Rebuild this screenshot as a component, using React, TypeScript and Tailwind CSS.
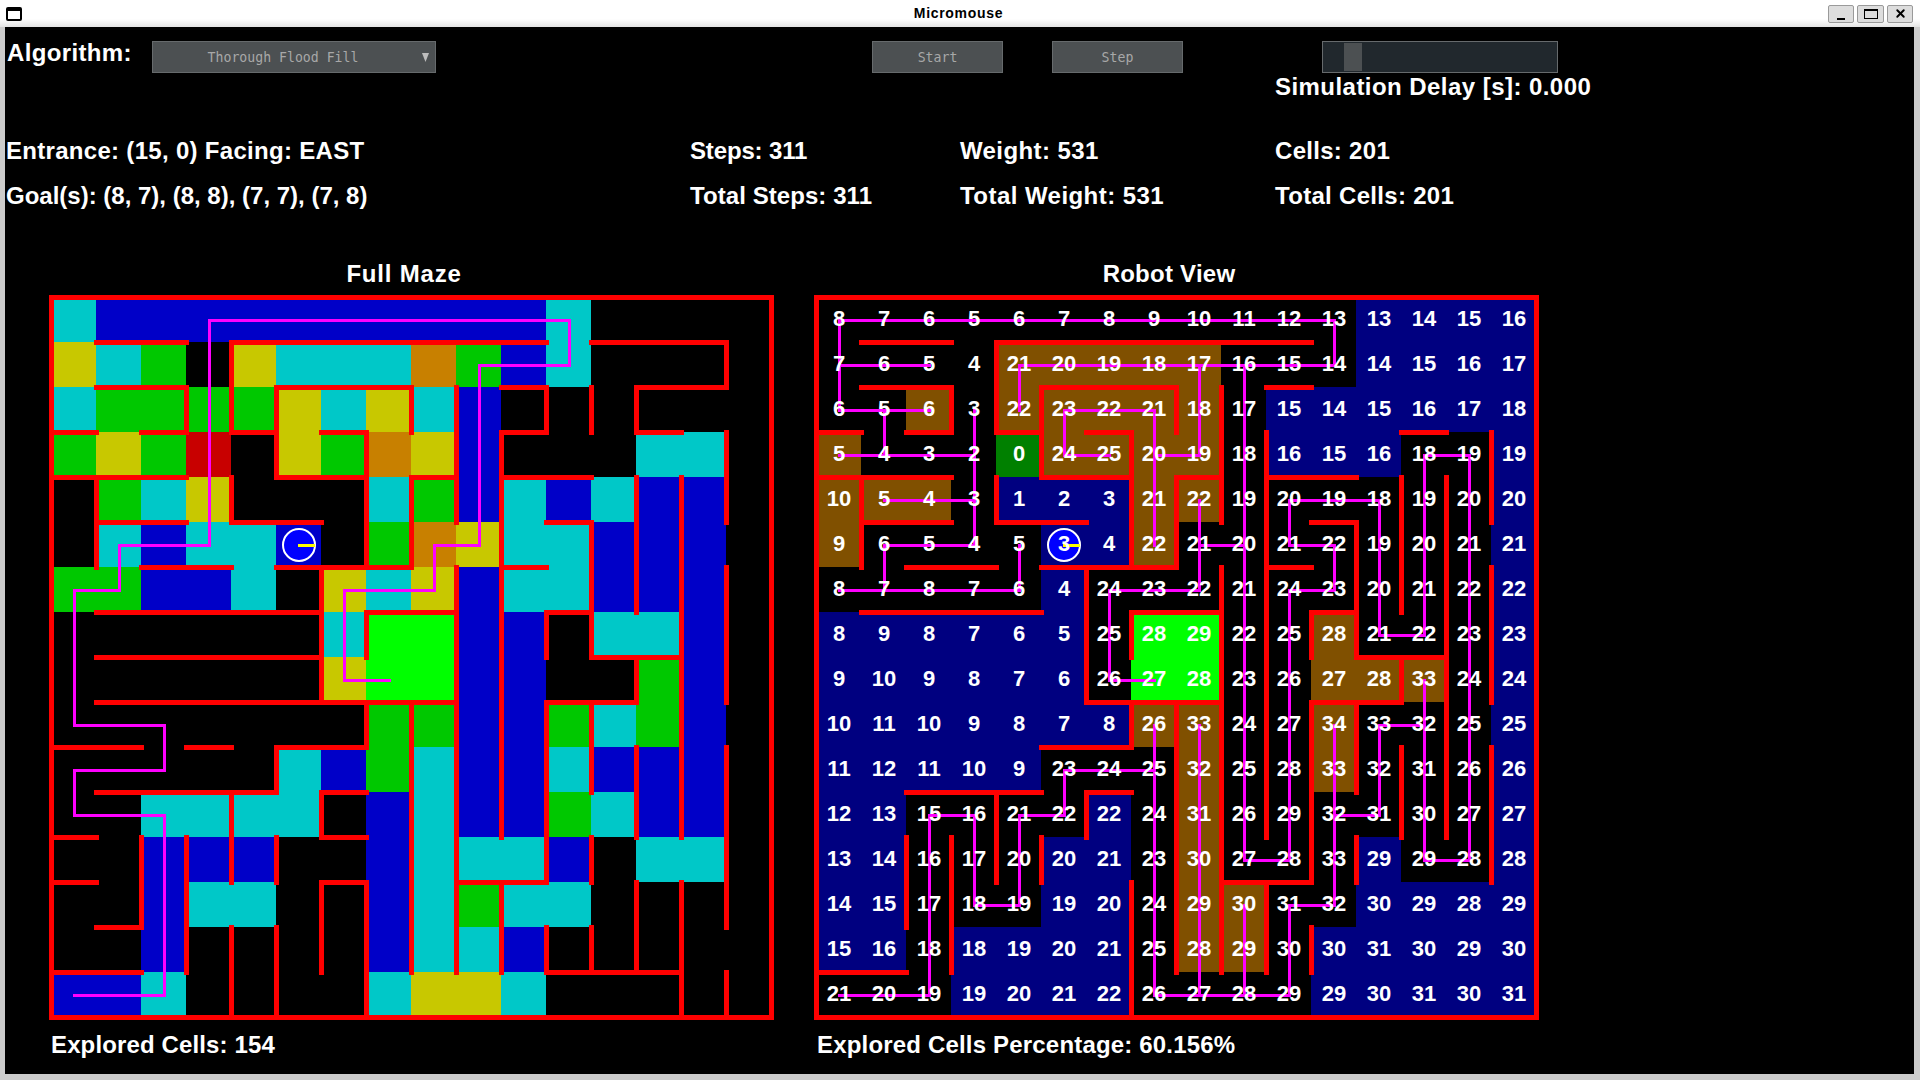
import { X } from "lucide-react"

const CELL = 45

const cellColors: Record<string, string> = {
  ".": "bg-black",
  c: "bg-[#00c8c8]",
  b: "bg-[#0000c8]",
  g: "bg-[#00c800]",
  y: "bg-[#c8c800]",
  o: "bg-[#c88000]",
  r: "bg-[#c80000]",
  l: "bg-[#00ff00]",
  n: "bg-[#000080]",
  w: "bg-[#805000]",
  d: "bg-[#008000]",
}

const fullColors = [
  "cbbbbbbbbbbc....",
  "ycg.ycccogbc....",
  "cggggycycb......",
  "gygr.ygoyb...cc.",
  ".gcy...cgbcbcbb.",
  ".cbccb.goyccbbb.",
  "ggbbc.ycybccbbb.",
  "......cllbb.ccb.",
  "......yllbb..gb.",
  ".......ggbbgcgb.",
  ".....cbgcbbcbbb.",
  "..cccc.bcbbgcbb.",
  "..bbb..bcccb.cc.",
  "..bcc..bcgcc....",
  "..b....bccb.....",
  "bbc....cyyc.....",
]

const robotColors = [
  "............nnnn",
  "....wwwww...nnnn",
  "..w.wwwww.nnnnnn",
  "w...dwwww.nnn..n",
  "www.nnnww......n",
  "w....nnw.......n",
  ".....n.........n",
  "nnnnnn.ll..w...n",
  "nnnnnn.ll..www.n",
  "nnnnnnnww..w...n",
  "nnnnn...w..w...n",
  "nn....n.w......n",
  "nn...nn.w...n..n",
  "nn...nn.ww..nnnn",
  "nn.nnnn.ww.nnnnn",
  "...nnnn....nnnnn",
]

const distances = [
  [8, 7, 6, 5, 6, 7, 8, 9, 10, 11, 12, 13, 13, 14, 15, 16],
  [7, 6, 5, 4, 21, 20, 19, 18, 17, 16, 15, 14, 14, 15, 16, 17],
  [6, 5, 6, 3, 22, 23, 22, 21, 18, 17, 15, 14, 15, 16, 17, 18],
  [5, 4, 3, 2, 0, 24, 25, 20, 19, 18, 16, 15, 16, 18, 19, 19],
  [10, 5, 4, 3, 1, 2, 3, 21, 22, 19, 20, 19, 18, 19, 20, 20],
  [9, 6, 5, 4, 5, 3, 4, 22, 21, 20, 21, 22, 19, 20, 21, 21],
  [8, 7, 8, 7, 6, 4, 24, 23, 22, 21, 24, 23, 20, 21, 22, 22],
  [8, 9, 8, 7, 6, 5, 25, 28, 29, 22, 25, 28, 21, 22, 23, 23],
  [9, 10, 9, 8, 7, 6, 26, 27, 28, 23, 26, 27, 28, 33, 24, 24],
  [10, 11, 10, 9, 8, 7, 8, 26, 33, 24, 27, 34, 33, 32, 25, 25],
  [11, 12, 11, 10, 9, 23, 24, 25, 32, 25, 28, 33, 32, 31, 26, 26],
  [12, 13, 15, 16, 21, 22, 22, 24, 31, 26, 29, 32, 31, 30, 27, 27],
  [13, 14, 16, 17, 20, 20, 21, 23, 30, 27, 28, 33, 29, 29, 28, 28],
  [14, 15, 17, 18, 19, 19, 20, 24, 29, 30, 31, 32, 30, 29, 28, 29],
  [15, 16, 18, 18, 19, 20, 21, 25, 28, 29, 30, 30, 31, 30, 29, 30],
  [21, 20, 19, 19, 20, 21, 22, 26, 27, 28, 29, 29, 30, 31, 30, 31],
]

type Seg = [number, number, number]

// horizontal: [line, fromCol, toCol], vertical: [line, fromRow, toRow]
const fullH: Seg[] = [
  [0, 0, 16], [16, 0, 16],
  [1, 1, 3], [1, 4, 11], [1, 12, 15],
  [2, 1, 3], [2, 5, 8], [2, 10, 11], [2, 13, 15],
  [3, 0, 1], [3, 2, 3], [3, 4, 5], [3, 6, 7], [3, 10, 11], [3, 13, 14],
  [4, 0, 3], [4, 5, 7], [4, 8, 9], [4, 10, 12],
  [5, 1, 3], [5, 4, 6], [5, 11, 12],
  [6, 2, 4], [6, 5, 8], [6, 10, 11],
  [7, 1, 6], [7, 7, 9], [7, 11, 12],
  [8, 1, 6], [8, 12, 14],
  [9, 1, 9], [9, 11, 13],
  [10, 0, 2], [10, 3, 4], [10, 5, 7],
  [11, 1, 5], [11, 6, 7],
  [12, 0, 1], [12, 6, 7],
  [13, 0, 1], [13, 6, 7], [13, 9, 11],
  [14, 1, 2],
  [15, 0, 2], [15, 11, 14],
]

const fullV: Seg[] = [
  [0, 0, 16], [16, 0, 16],
  [1, 4, 6],
  [2, 12, 14],
  [3, 2, 3], [3, 12, 15],
  [4, 1, 3], [4, 4, 5], [4, 11, 13], [4, 14, 16],
  [5, 2, 4], [5, 10, 11], [5, 12, 13], [5, 14, 16],
  [6, 6, 9], [6, 11, 12], [6, 13, 15],
  [7, 3, 6], [7, 7, 8], [7, 9, 10], [7, 13, 16],
  [8, 2, 3], [8, 4, 6], [8, 9, 15],
  [9, 2, 5], [9, 6, 15],
  [10, 3, 12], [10, 13, 15],
  [11, 2, 3], [11, 7, 8], [11, 9, 13], [11, 14, 15],
  [12, 2, 3], [12, 5, 8], [12, 9, 11], [12, 12, 13], [12, 14, 15],
  [13, 2, 3], [13, 4, 7], [13, 8, 9], [13, 10, 12], [13, 13, 15],
  [14, 4, 12], [14, 13, 16],
  [15, 1, 2], [15, 3, 5], [15, 6, 9], [15, 10, 14], [15, 15, 16],
]

const robotH: Seg[] = [
  [0, 0, 16], [16, 0, 16],
  [1, 1, 3], [1, 4, 11],
  [2, 1, 3], [2, 5, 8], [2, 10, 11],
  [3, 0, 1], [3, 2, 3], [3, 4, 5], [3, 6, 7], [3, 13, 14],
  [4, 0, 3], [4, 5, 7], [4, 8, 9], [4, 10, 12],
  [5, 1, 3], [5, 4, 6], [5, 11, 12],
  [6, 2, 4], [6, 5, 8], [6, 10, 11],
  [7, 1, 5], [7, 7, 9], [7, 11, 12],
  [8, 12, 14],
  [9, 6, 9], [9, 11, 13],
  [10, 5, 7],
  [11, 2, 5], [11, 6, 7],
  [13, 9, 11],
  [15, 0, 2],
]

const robotV: Seg[] = [
  [0, 0, 16], [16, 0, 16],
  [1, 4, 6],
  [2, 12, 14],
  [3, 2, 3], [3, 12, 15],
  [4, 1, 3], [4, 4, 5], [4, 11, 13],
  [5, 2, 4], [5, 12, 13],
  [6, 6, 9], [6, 11, 12],
  [7, 3, 6], [7, 7, 8], [7, 9, 10], [7, 13, 16],
  [8, 2, 3], [8, 4, 6], [8, 9, 15],
  [9, 2, 5], [9, 6, 15],
  [10, 3, 12], [10, 13, 15],
  [11, 7, 8], [11, 9, 13], [11, 14, 15],
  [12, 5, 8], [12, 9, 11], [12, 12, 13],
  [13, 4, 7], [13, 8, 9], [13, 10, 12],
  [14, 4, 12],
  [15, 3, 5], [15, 6, 9], [15, 10, 13],
]

// [col, row] waypoints
const fullPath: [number, number][] = [
  [7, 8], [6, 8], [6, 6], [8, 6], [8, 5], [9, 5], [9, 1], [11, 1], [11, 0], [3, 0], [3, 5], [1, 5],
  [1, 6], [0, 6], [0, 9], [2, 9], [2, 10], [0, 10], [0, 11], [2, 11], [2, 15], [0, 15],
]

const robotPath: [number, number][][] = [
  [[2, 1], [0, 1]],
  [[2, 2], [0, 2], [0, 0], [11, 0], [11, 1], [4, 1], [4, 2]],
  [[1, 2], [1, 3]],
  [[0, 3], [3, 3]],
  [[3, 2], [3, 5]],
  [[1, 4], [3, 4]],
  [[3, 5], [1, 5], [1, 6]],
  [[0, 6], [4, 6], [4, 5]],
  [[5, 3], [6, 3]],
  [[5, 3], [5, 2], [7, 2], [7, 5]],
  [[7, 3], [8, 3]],
  [[8, 1], [8, 3]],
  [[9, 1], [9, 12], [10, 12], [10, 6], [11, 6], [11, 5], [10, 5], [10, 4], [12, 4], [12, 7], [13, 7], [13, 3], [14, 3], [14, 12], [13, 12], [13, 8]],
  [[13, 9], [12, 9], [12, 11], [11, 11]],
  [[11, 9], [11, 13], [10, 13], [10, 15], [7, 15], [7, 9]],
  [[9, 13], [9, 15]],
  [[8, 9], [8, 15]],
  [[7, 10], [5, 10], [5, 11], [4, 11], [4, 13], [3, 13], [3, 11], [2, 11], [2, 15], [0, 15]],
  [[9, 5], [8, 5]],
  [[8, 4], [8, 6], [6, 6], [6, 8], [7, 8]],
]

const pt = (n: number) => n * CELL + 22

function Walls({ h, v }: { h: Seg[]; v: Seg[] }) {
  return (
    <>
      {h.map(([line, a, b]) => (
        <rect key={`h${line}-${a}`} x={a * CELL - 2} y={line * CELL - 2} width={(b - a) * CELL + 5} height={5} fill="#ff0000" />
      ))}
      {v.map(([line, a, b]) => (
        <rect key={`v${line}-${a}`} x={line * CELL - 2} y={a * CELL - 2} width={5} height={(b - a) * CELL + 5} fill="#ff0000" />
      ))}
    </>
  )
}

function PathLine({ points }: { points: [number, number][] }) {
  return (
    <>
      {points.slice(1).map(([c, r], i) => {
        const [pc, pr] = points[i]
        return (
          <rect
            key={i}
            x={pt(Math.min(c, pc))}
            y={pt(Math.min(r, pr))}
            width={Math.abs(c - pc) * CELL + 3}
            height={Math.abs(r - pr) * CELL + 3}
            fill="#ff00ff"
          />
        )
      })}
    </>
  )
}

function MazeView({ colors, h, v, paths, numbers }: { colors: string[]; h: Seg[]; v: Seg[]; paths: [number, number][][]; numbers?: number[][] }) {
  return (
    <div className="relative h-[720px] w-[720px]">
      <div className="grid h-full w-full grid-cols-[repeat(16,45px)] grid-rows-[repeat(16,45px)]">
        {colors.flatMap((row, r) =>
          row.split("").map((ch, c) => <div key={`${r}-${c}`} className={cellColors[ch]} />)
        )}
      </div>
      <svg className="absolute left-0 top-0 overflow-visible" width={720} height={720} shapeRendering="crispEdges">
        <Walls h={h} v={v} />
        {paths.map((p, i) => (
          <PathLine key={i} points={p} />
        ))}
        <circle cx={248} cy={248} r={16} fill="#0000ff" stroke="#ffffff" strokeWidth={2} shapeRendering="auto" />
        <rect x={247} y={247} width={17} height={3} fill="#ffff00" />
      </svg>
      {numbers && (
        <div className="absolute left-0 top-0 grid h-full w-full grid-cols-[repeat(16,45px)] grid-rows-[repeat(16,45px)]">
          {numbers.flatMap((row, r) =>
            row.map((n, c) => (
              <div key={`${r}-${c}`} className="flex items-center justify-center pb-[2px] pl-[1px] text-[22px] font-bold leading-none text-white">
                {n}
              </div>
            ))
          )}
        </div>
      )}
    </div>
  )
}

export default function App() {
  return (
    <div className="flex h-[1080px] w-[1920px] flex-col overflow-hidden bg-[#cccccc] font-['Liberation_Sans',sans-serif]">
      {/* window title bar */}
      <div className="flex h-[27px] items-center bg-gradient-to-b from-white from-70% to-[#e4e4e4]">
        <div className="ml-[6px] h-[14px] w-[16px] rounded-[2px] border-2 border-t-[4px] border-black bg-white" />
        <div className="flex-1 pb-[2px] pl-[67px] text-center text-[14px] font-bold leading-none tracking-[0.7px] text-black">Micromouse</div>
        <div className="mr-[7px] flex gap-[3px]">
          <div className="flex h-[18px] w-[26px] items-end justify-center rounded-[2px] border border-[#9a9a9a] bg-[#dddddd] pb-[2px]">
            <div className="h-[2px] w-[8px] bg-black" />
          </div>
          <div className="flex h-[18px] w-[27px] items-center justify-center rounded-[2px] border border-[#9a9a9a] bg-[#dddddd]">
            <div className="h-[10px] w-[14px] border border-t-2 border-black" />
          </div>
          <div className="flex h-[18px] w-[26px] items-center justify-center rounded-[2px] border border-[#9a9a9a] bg-[#dddddd]">
            <X size={13} strokeWidth={3.5} color="#000000" />
          </div>
        </div>
      </div>

      <div className="mb-[6px] ml-[5px] mr-[6px] flex flex-1 flex-col bg-black text-[24px] font-bold leading-none text-white">
        {/* controls */}
        <div className="flex h-[78px] pl-[2px] pt-[14px]">
          <div className="w-[145px] tracking-[0.35px]">Algorithm:</div>
          <div className="relative flex h-[32px] w-[284px] items-center border border-[#666a6c] bg-[#4c5052] pr-[22px] pt-[2px] font-['DejaVu_Sans_Mono',monospace] text-[13.2px] font-normal text-[#a8a8a8]">
            <span className="flex-1 text-center">Thorough Flood Fill</span>
            <svg className="absolute right-[6px] top-[11px]" width={7} height={9} viewBox="0 0 7 9">
              <polygon points="0,0 7,0 3.5,9" fill="#bdbdbd" />
            </svg>
          </div>
          <div className="ml-[436px] flex h-[32px] w-[131px] items-center justify-center border border-[#666a6c] bg-[#4c5052] pt-[2px] font-['DejaVu_Sans_Mono',monospace] text-[13.2px] font-normal text-[#a8a8a8]">
            Start
          </div>
          <div className="ml-[49px] flex h-[32px] w-[131px] items-center justify-center border border-[#666a6c] bg-[#4c5052] pt-[2px] font-['DejaVu_Sans_Mono',monospace] text-[13.2px] font-normal text-[#a8a8a8]">
            Step
          </div>
          <div className="ml-[92px] flex flex-col">
            <div className="ml-[47px] flex h-[32px] w-[236px] items-center border border-[#666a6c] bg-[#21282d] pl-[21px]">
              <div className="h-[28px] w-[18px] bg-[#4c5052]" />
            </div>
            <div className="mt-[2px] whitespace-nowrap tracking-[0.45px]">Simulation Delay [s]: 0.000</div>
          </div>
        </div>

        {/* stats */}
        <div className="grid grid-cols-[684px_270px_315px_1fr] grid-rows-[45px_45px] items-center pl-[1px] pt-[23px]">
          <div className="tracking-[0.3px]">Entrance: (15, 0) Facing: EAST</div>
          <div className="tracking-[-0.15px]">Steps: 311</div>
          <div className="tracking-[0.4px]">Weight: 531</div>
          <div className="tracking-[0.3px]">Cells: 201</div>
          <div>Goal(s): (8, 7), (8, 8), (7, 7), (7, 8)</div>
          <div className="tracking-[0.07px]">Total Steps: 311</div>
          <div className="tracking-[0.45px]">Total Weight: 531</div>
          <div className="tracking-[0.3px]">Total Cells: 201</div>
        </div>

        {/* mazes */}
        <div className="flex gap-[45px] pl-[46px] pt-[34px]">
          <div className="flex flex-col">
            <div className="h-[45px] pr-[14px] pt-[10px] text-center tracking-[0.8px]">Full Maze</div>
            <MazeView colors={fullColors} h={fullH} v={fullV} paths={[fullPath]} />
            <div className="pt-[16px] tracking-[0.13px]">Explored Cells: 154</div>
          </div>
          <div className="flex flex-col">
            <div className="h-[45px] pr-[14px] pt-[10px] text-center tracking-[0.25px]">Robot View</div>
            <MazeView colors={robotColors} h={robotH} v={robotV} paths={robotPath} numbers={distances} />
            <div className="pl-[1px] pt-[16px] tracking-[0.18px]">Explored Cells Percentage: 60.156%</div>
          </div>
        </div>
      </div>
    </div>
  )
}
